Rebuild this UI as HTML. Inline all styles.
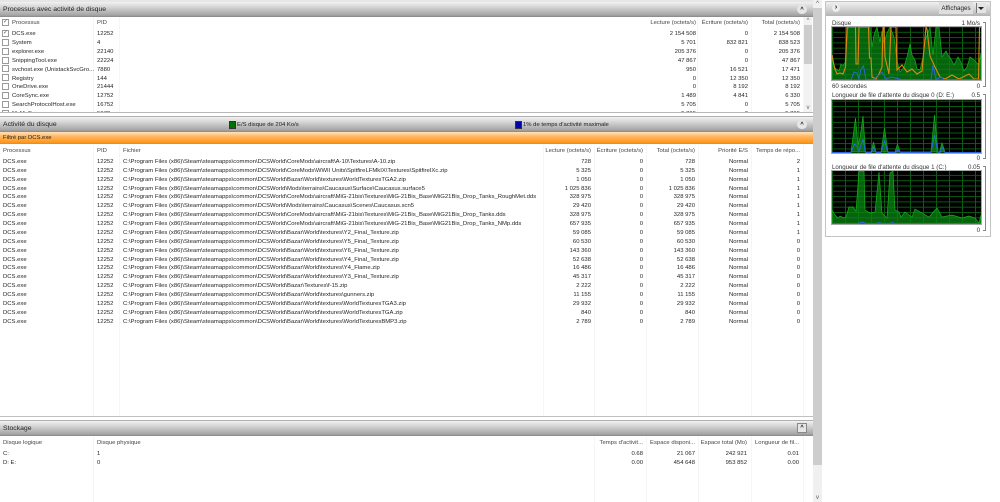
<!DOCTYPE html>
<html lang="fr"><head><meta charset="utf-8"><title>Moniteur de ressources</title>
<style>
html,body{margin:0;padding:0;background:#fff;width:1000px;height:502px;overflow:hidden}
#w{position:absolute;left:0;top:0;width:1000px;height:502px;overflow:hidden;font:5.92px/9px "Liberation Sans",sans-serif;color:#262626;filter:blur(.38px)}
#w div{position:absolute}
.bar{left:0;width:813px;height:15px;background:linear-gradient(#f2f2f2,#dcdcdc 25%,#a4a4a4 88%,#868686);font-size:6.85px;line-height:16px;color:#222;text-indent:3px}
.btn{left:797px;width:10px;height:9px;border-radius:5px;background:#e6e6e6;text-align:center;font-size:6px;line-height:10px;text-indent:0;color:#111;font-weight:bold}
.v{width:1px;background:#f6f6fa}
.h{height:9px;left:0;width:804px;white-space:nowrap;color:#444}
.t{height:9px;left:0;width:804px;white-space:nowrap}
.h span,.t span{position:absolute;top:1px}
.a{left:3px}.k{left:12px}.p{left:97px}.f{left:123px}
.c1,.c2,.c3,.c4,.c5,.c6,.c7,.c8,.c9,.c10,.c11,.c12{text-align:right;width:70px}
.c1{left:626px}.c2{left:678px}.c3{left:730px}
.c4{left:521px}.c5{left:573px}.c6{left:625px}.c7{left:678px}.c8{left:730px}
.c9{left:573px}.c10{left:625px}.c11{left:677px}.c12{left:729px}
.cb{left:2px;width:5px;height:5px;border:1px solid #9a9a9a;background:#fff;font-size:6px;line-height:5px;text-align:center;color:#666}
.lb{white-space:nowrap;color:#333;font-size:6.15px;line-height:9px}
.rb{right:20px;text-align:right;color:#333;font-size:6.15px;line-height:9px}
.br{left:983px;width:2px;border:solid #888;border-width:1px 1px 1px 0}
</style></head><body><div id="w">

<!-- section 1 -->
<div style="left:0;top:0;width:813px;height:2px;background:#e6e6e6"></div>
<div class="bar" style="top:2px">Processus avec activité de disque<div class="btn" style="top:3px">^</div></div>
<div style="left:0;top:17px;width:813px;height:95px;overflow:hidden">
<div class="v" style="left:93px;top:0;height:95px"></div><div class="v" style="left:119px;top:0;height:95px"></div>
<div class="v" style="left:697px;top:0;height:95px"></div><div class="v" style="left:751px;top:0;height:95px"></div><div class="v" style="left:803px;top:0;height:95px"></div>
<div class="h" style="top:1px"><span class="k">Processus</span><span class="p">PID</span><span class="c1">Lecture (octets/s)</span><span class="c2">Écriture (octets/s)</span><span class="c3">Total (octets/s)</span></div>
<div class="cb" style="top:2px">✓</div>
<div class="cb" style="top:13px">✓</div><div class="t" style="top:12px"><span class="k">DCS.exe</span><span class="p">12252</span><span class="c1">2 154 508</span><span class="c2">0</span><span class="c3">2 154 508</span></div>
<div class="cb" style="top:22px"></div><div class="t" style="top:21px"><span class="k">System</span><span class="p">4</span><span class="c1">5 701</span><span class="c2">832 821</span><span class="c3">838 523</span></div>
<div class="cb" style="top:31px"></div><div class="t" style="top:30px"><span class="k">explorer.exe</span><span class="p">22140</span><span class="c1">205 376</span><span class="c2">0</span><span class="c3">205 376</span></div>
<div class="cb" style="top:40px"></div><div class="t" style="top:39px"><span class="k">SnippingTool.exe</span><span class="p">22224</span><span class="c1">47 867</span><span class="c2">0</span><span class="c3">47 867</span></div>
<div class="cb" style="top:48px"></div><div class="t" style="top:47.5px"><span class="k">svchost.exe (UnistackSvcGro...</span><span class="p">7880</span><span class="c1">950</span><span class="c2">16 521</span><span class="c3">17 471</span></div>
<div class="cb" style="top:57px"></div><div class="t" style="top:56.5px"><span class="k">Registry</span><span class="p">144</span><span class="c1">0</span><span class="c2">12 350</span><span class="c3">12 350</span></div>
<div class="cb" style="top:66px"></div><div class="t" style="top:65px"><span class="k">OneDrive.exe</span><span class="p">21444</span><span class="c1">0</span><span class="c2">8 192</span><span class="c3">8 192</span></div>
<div class="cb" style="top:75px"></div><div class="t" style="top:74px"><span class="k">CoreSync.exe</span><span class="p">12752</span><span class="c1">1 489</span><span class="c2">4 841</span><span class="c3">6 330</span></div>
<div class="cb" style="top:84px"></div><div class="t" style="top:83px"><span class="k">SearchProtocolHost.exe</span><span class="p">16752</span><span class="c1">5 705</span><span class="c2">0</span><span class="c3">5 705</span></div>
<div class="cb" style="top:93px"></div><div class="t" style="top:92px"><span class="k">MsMpEng.exe</span><span class="p">5672</span><span class="c1">5 395</span><span class="c2">0</span><span class="c3">5 395</span></div>
<div style="left:804px;top:0;width:8px;height:95px;background:#f2f2f2"></div>
<div style="left:804px;top:8px;width:8px;height:39px;background:#cdcdcd"></div>
<div style="left:804px;top:0;width:8px;text-align:center;color:#666;font-size:6px;line-height:8px">^</div>
<div style="left:804px;top:88px;width:8px;text-align:center;color:#666;font-size:6px;line-height:7px">v</div>
</div>
<div style="left:0;top:112px;width:813px;height:1px;background:#b8b8b8"></div>

<!-- section 2 -->
<div style="left:0;top:116px;width:813px;height:1px;background:#b0b0b0"></div>
<div class="bar" style="top:117px">Activité du disque<div class="btn" style="top:3px">^</div></div>
<div style="left:229px;top:121px;width:5px;height:6px;background:#007000;border:1px solid #333"></div>
<div style="left:237px;top:120px;white-space:nowrap;color:#222;line-height:10px">E/S disque de 204 Ko/s</div>
<div style="left:515px;top:121px;width:5px;height:6px;background:#0000b0;border:1px solid #333"></div>
<div style="left:523px;top:120px;white-space:nowrap;color:#222;line-height:10px">1% de temps d'activité maximale</div>
<div style="left:0;top:132px;width:813px;height:12px;background:linear-gradient(#ffe2bb,#ffb45c 40%,#ff9a1f 85%,#e88a18);line-height:13px;text-indent:3px;color:#222">Filtré par DCS.exe</div>
<div style="left:0;top:145px;width:804px;height:271px">
<div class="v" style="left:93px;top:0;height:271px"></div><div class="v" style="left:119px;top:0;height:271px"></div><div class="v" style="left:543px;top:0;height:271px"></div><div class="v" style="left:594px;top:0;height:271px"></div><div class="v" style="left:646px;top:0;height:271px"></div><div class="v" style="left:698px;top:0;height:271px"></div><div class="v" style="left:751px;top:0;height:271px"></div><div class="v" style="left:803px;top:0;height:271px"></div>
<div class="h" style="top:1px"><span class="a">Processus</span><span class="p">PID</span><span class="f">Fichier</span><span class="c4">Lecture (octets/s)</span><span class="c5">Écriture (octets/s)</span><span class="c6">Total (octets/s)</span><span class="c7">Priorité E/S</span><span class="c8">Temps de répo...</span></div>
<div class="t" style="top:12px"><span class="a">DCS.exe</span><span class="p">12252</span><span class="f">C:\Program Files (x86)\Steam\steamapps\common\DCSWorld\CoreMods\aircraft\A-10\Textures\A-10.zip</span><span class="c4">728</span><span class="c5">0</span><span class="c6">728</span><span class="c7">Normal</span><span class="c8">2</span></div>
<div class="t" style="top:20.9px"><span class="a">DCS.exe</span><span class="p">12252</span><span class="f">C:\Program Files (x86)\Steam\steamapps\common\DCSWorld\CoreMods\WWII Units\SpitfireLFMkIX\Textures\SpitfireIXc.zip</span><span class="c4">5 325</span><span class="c5">0</span><span class="c6">5 325</span><span class="c7">Normal</span><span class="c8">1</span></div>
<div class="t" style="top:29.7px"><span class="a">DCS.exe</span><span class="p">12252</span><span class="f">C:\Program Files (x86)\Steam\steamapps\common\DCSWorld\Bazar\World\textures\WorldTexturesTGA2.zip</span><span class="c4">1 050</span><span class="c5">0</span><span class="c6">1 050</span><span class="c7">Normal</span><span class="c8">1</span></div>
<div class="t" style="top:38.6px"><span class="a">DCS.exe</span><span class="p">12252</span><span class="f">C:\Program Files (x86)\Steam\steamapps\common\DCSWorld\Mods\terrains\Caucasus\Surface\Caucasus.surface5</span><span class="c4">1 025 836</span><span class="c5">0</span><span class="c6">1 025 836</span><span class="c7">Normal</span><span class="c8">1</span></div>
<div class="t" style="top:47.4px"><span class="a">DCS.exe</span><span class="p">12252</span><span class="f">C:\Program Files (x86)\Steam\steamapps\common\DCSWorld\CoreMods\aircraft\MiG-21bis\Textures\MiG-21Bis_Base\MiG21Bis_Drop_Tanks_RoughMet.dds</span><span class="c4">328 975</span><span class="c5">0</span><span class="c6">328 975</span><span class="c7">Normal</span><span class="c8">1</span></div>
<div class="t" style="top:56.3px"><span class="a">DCS.exe</span><span class="p">12252</span><span class="f">C:\Program Files (x86)\Steam\steamapps\common\DCSWorld\Mods\terrains\Caucasus\Scenes\Caucasus.scn5</span><span class="c4">29 420</span><span class="c5">0</span><span class="c6">29 420</span><span class="c7">Normal</span><span class="c8">1</span></div>
<div class="t" style="top:65.2px"><span class="a">DCS.exe</span><span class="p">12252</span><span class="f">C:\Program Files (x86)\Steam\steamapps\common\DCSWorld\CoreMods\aircraft\MiG-21bis\Textures\MiG-21Bis_Base\MiG21Bis_Drop_Tanks.dds</span><span class="c4">328 975</span><span class="c5">0</span><span class="c6">328 975</span><span class="c7">Normal</span><span class="c8">1</span></div>
<div class="t" style="top:74px"><span class="a">DCS.exe</span><span class="p">12252</span><span class="f">C:\Program Files (x86)\Steam\steamapps\common\DCSWorld\CoreMods\aircraft\MiG-21bis\Textures\MiG-21Bis_Base\MiG21Bis_Drop_Tanks_NMp.dds</span><span class="c4">657 935</span><span class="c5">0</span><span class="c6">657 935</span><span class="c7">Normal</span><span class="c8">1</span></div>
<div class="t" style="top:82.9px"><span class="a">DCS.exe</span><span class="p">12252</span><span class="f">C:\Program Files (x86)\Steam\steamapps\common\DCSWorld\Bazar\World\textures\Y2_Final_Texture.zip</span><span class="c4">59 085</span><span class="c5">0</span><span class="c6">59 085</span><span class="c7">Normal</span><span class="c8">1</span></div>
<div class="t" style="top:91.7px"><span class="a">DCS.exe</span><span class="p">12252</span><span class="f">C:\Program Files (x86)\Steam\steamapps\common\DCSWorld\Bazar\World\textures\Y5_Final_Texture.zip</span><span class="c4">60 530</span><span class="c5">0</span><span class="c6">60 530</span><span class="c7">Normal</span><span class="c8">0</span></div>
<div class="t" style="top:100.6px"><span class="a">DCS.exe</span><span class="p">12252</span><span class="f">C:\Program Files (x86)\Steam\steamapps\common\DCSWorld\Bazar\World\textures\Y6_Final_Texture.zip</span><span class="c4">143 360</span><span class="c5">0</span><span class="c6">143 360</span><span class="c7">Normal</span><span class="c8">0</span></div>
<div class="t" style="top:109.5px"><span class="a">DCS.exe</span><span class="p">12252</span><span class="f">C:\Program Files (x86)\Steam\steamapps\common\DCSWorld\Bazar\World\textures\Y4_Final_Texture.zip</span><span class="c4">52 638</span><span class="c5">0</span><span class="c6">52 638</span><span class="c7">Normal</span><span class="c8">0</span></div>
<div class="t" style="top:118.3px"><span class="a">DCS.exe</span><span class="p">12252</span><span class="f">C:\Program Files (x86)\Steam\steamapps\common\DCSWorld\Bazar\World\textures\Y4_Flame.zip</span><span class="c4">16 486</span><span class="c5">0</span><span class="c6">16 486</span><span class="c7">Normal</span><span class="c8">0</span></div>
<div class="t" style="top:127.2px"><span class="a">DCS.exe</span><span class="p">12252</span><span class="f">C:\Program Files (x86)\Steam\steamapps\common\DCSWorld\Bazar\World\textures\Y3_Final_Texture.zip</span><span class="c4">45 317</span><span class="c5">0</span><span class="c6">45 317</span><span class="c7">Normal</span><span class="c8">0</span></div>
<div class="t" style="top:136px"><span class="a">DCS.exe</span><span class="p">12252</span><span class="f">C:\Program Files (x86)\Steam\steamapps\common\DCSWorld\Bazar\Textures\f-15.zip</span><span class="c4">2 222</span><span class="c5">0</span><span class="c6">2 222</span><span class="c7">Normal</span><span class="c8">0</span></div>
<div class="t" style="top:144.9px"><span class="a">DCS.exe</span><span class="p">12252</span><span class="f">C:\Program Files (x86)\Steam\steamapps\common\DCSWorld\Bazar\World\textures\gunners.zip</span><span class="c4">11 155</span><span class="c5">0</span><span class="c6">11 155</span><span class="c7">Normal</span><span class="c8">0</span></div>
<div class="t" style="top:153.8px"><span class="a">DCS.exe</span><span class="p">12252</span><span class="f">C:\Program Files (x86)\Steam\steamapps\common\DCSWorld\Bazar\World\textures\WorldTexturesTGA3.zip</span><span class="c4">29 932</span><span class="c5">0</span><span class="c6">29 932</span><span class="c7">Normal</span><span class="c8">0</span></div>
<div class="t" style="top:162.6px"><span class="a">DCS.exe</span><span class="p">12252</span><span class="f">C:\Program Files (x86)\Steam\steamapps\common\DCSWorld\Bazar\World\textures\WorldTexturesTGA.zip</span><span class="c4">840</span><span class="c5">0</span><span class="c6">840</span><span class="c7">Normal</span><span class="c8">0</span></div>
<div class="t" style="top:171.5px"><span class="a">DCS.exe</span><span class="p">12252</span><span class="f">C:\Program Files (x86)\Steam\steamapps\common\DCSWorld\Bazar\World\textures\WorldTexturesBMP3.zip</span><span class="c4">2 789</span><span class="c5">0</span><span class="c6">2 789</span><span class="c7">Normal</span><span class="c8">0</span></div>
</div>
<div style="left:0;top:416px;width:813px;height:1px;background:#c0c0c0"></div>

<!-- section 3 -->
<div style="left:0;top:420px;width:813px;height:1px;background:#b0b0b0"></div>
<div class="bar" style="top:421px">Stockage<div style="left:797px;top:2px;width:10px;height:10px;background:#e6e6e6;border:1px solid #888;box-sizing:border-box;text-align:center;text-indent:0;font-size:6px;line-height:9px;font-weight:bold;color:#111">^</div></div>
<div style="left:0;top:436px;width:804px;height:66px">
<div class="v" style="left:93px;top:0;height:66px"></div><div class="v" style="left:594px;top:0;height:66px"></div><div class="v" style="left:646px;top:0;height:66px"></div><div class="v" style="left:698px;top:0;height:66px"></div><div class="v" style="left:751px;top:0;height:66px"></div><div class="v" style="left:803px;top:0;height:66px"></div>
<div class="h" style="top:1.5px"><span class="a">Disque logique</span><span class="p">Disque physique</span><span class="c9">Temps d'activit...</span><span class="c10">Espace disponi...</span><span class="c11">Espace total (Mo)</span><span class="c12">Longueur de fil...</span></div>
<div class="t" style="top:12.5px"><span class="a">C:</span><span class="p">1</span><span class="c9">0.68</span><span class="c10">21 067</span><span class="c11">242 921</span><span class="c12">0.01</span></div>
<div class="t" style="top:21.5px"><span class="a">D: E:</span><span class="p">0</span><span class="c9">0.00</span><span class="c10">454 648</span><span class="c11">953 852</span><span class="c12">0.00</span></div>
</div>

<!-- main scrollbar -->
<div style="left:813px;top:0;width:9px;height:502px;background:#f0f0f0"></div>
<div style="left:813px;top:8px;width:9px;height:457px;background:#cdcdcd"></div>
<div style="left:813px;top:0;width:9px;text-align:center;font-size:6px;line-height:8px;color:#555">^</div>
<div style="left:813px;top:494px;width:9px;text-align:center;font-size:6px;line-height:8px;color:#555">v</div>

<!-- right panel -->
<div style="left:825px;top:1px;width:164px;height:234px;border:1px solid #c4c4c4;background:#fff"></div>
<div style="left:826px;top:2px;width:164px;height:14px;background:linear-gradient(#f0f0f0,#dadada 40%,#b4b4b4)"></div>
<div style="left:832px;top:4px;width:8px;height:8px;border-radius:4px;background:#ececec;text-align:center;font-size:7px;line-height:7px;font-weight:bold;color:#111">›</div>
<div style="left:939px;top:2px;width:34px;height:12px;background:#dedede;text-align:center;line-height:13px;font-size:6.3px;color:#222">Affichages</div>
<div style="left:976px;top:3px;width:9px;height:10px;background:#e4e4e4;border-left:1px solid #777"></div>
<div style="left:978px;top:7px;width:0;height:0;border:3px solid transparent;border-top:3px solid #222"></div>

<div class="lb" style="left:832px;top:18.500px">Disque</div><div class="rb" style="top:18.500px">1 Mo/s</div>
<div class="br" style="top:22px;height:63px"></div>
<div class="lb" style="left:832px;top:81.500px">60 secondes</div><div class="rb" style="top:81.500px">0</div>
<div class="lb" style="left:832px;top:90.500px">Longueur de file d'attente du disque 0 (D: E:)</div><div class="rb" style="top:90.500px">0.5</div>
<div class="br" style="top:94px;height:63px"></div>
<div class="rb" style="top:153.500px">0</div>
<div class="lb" style="left:832px;top:162.500px">Longueur de file d'attente du disque 1 (C:)</div><div class="rb" style="top:162.500px">0.05</div>
<div class="br" style="top:166px;height:63px"></div>
<div class="rb" style="top:225.500px">0</div>

<svg style="position:absolute;left:0;top:0;width:1000px;height:502px" viewBox="0 0 1000 502">
<defs>
<pattern id="g" width="13" height="5.3" patternUnits="userSpaceOnUse"><path d="M.5 0V5.3M0 .5H13" stroke="#0a5c10" stroke-width="1" fill="none"/></pattern>
</defs>
<rect x="832" y="27" width="149" height="53" fill="#000"/><rect x="832" y="27" width="149" height="53" fill="url(#g)"/>
<rect x="832" y="100" width="149" height="53" fill="#000"/><rect x="832" y="100" width="149" height="53" fill="url(#g)"/>
<rect x="832" y="171" width="149" height="53" fill="#000"/><rect x="832" y="171" width="149" height="53" fill="url(#g)"/>

<g transform="translate(832,27)">
<path d="M0 30L3 41L7 44L9 37L11 39L13 36L16 0L38 0L40 20L42 8L45 0L48 15L50 4L52 16L55 6L58 0L62 10L65 34L68 45L72 40L75 30L78 17L80 28L83 33L85 42L88 43L91 30L93 14L95 8L98 0L101 28L104 0L107 0L110 30L114 24L116 28L119 32L122 38L126 30L129 35L132 44L135 40L138 30L142 33L147 38L149 26L149 53L0 53Z" fill="#0a8412" fill-opacity=".75" stroke="#14b01c" stroke-width=".7"/>
<path d="M0 28L2.5 41L5 47L8 46L11 47L13.5 40L15 0L23.500 0L24 37L26 37L27 0L36.500 0L37.500 31L39 31L40 50L44 52L47 47L50 40L51 0L52 0L53 30L57 47L59 0L64 0L65 43L70 38L75 45L80 42L85 47L90 44L94 0L95 2L98 29L103 40L108 50L113 52L120 48L127 52L137 47L142 52L146.500 52L147.500 0L149 0" fill="none" stroke="#e08a10" stroke-width="1.100"/>
<path d="M0 52.500L19 52.500L22 45L25 46L27 52L29 42L31.500 39L34 52.500L42 52.500L50 45L54 52L59 50L64 51L69 52.500L99 52.500L101 38L104 52.500L109 50L112 52.500L149 52.500" fill="none" stroke="#2a66e0" stroke-width="1"/>
</g>

<g transform="translate(832,100)">
<path d="M19 52L23.500 18L26 45L28 38L31 16L33.500 52L39 52L41.500 42L44 52L49 52L52.500 28L56 52L63 52L65.500 44L68 52L99 52L102.500 15L106 52L107.500 52L110 43L113 52Z" fill="#0a8412" fill-opacity=".8" stroke="#14b01c" stroke-width=".7"/>
<path d="M0 52.500L19 52.500L22.500 44L25 46L27 51L31 39L33.500 52.500L39.500 52.500L41.500 47L44 52.500L49 52.500L52.500 41L56 52.500L64 52.500L65.500 49L68 52.500L99 52.500L102.500 35L106 52.500L108 52.500L110 47L113 52.500L149 52.500" fill="none" stroke="#2a66e0" stroke-width="1"/>
</g>

<g transform="translate(832,171)">
<path d="M0 39L3 44L6 47L8 45L12 47L14 46L17 36L21 36L24 40L27 0L32 0L33 39L38 42L43 41L47 1L50 42L55 47L58 2L61 0L63 39L67 41L69 46L73 41L77 44L80 46L83 38L90 42L97 46L105 37L110 46L120 44L130 47L137 45L143 47L147 52L149 44L149 53L0 53Z" fill="#0a8412" fill-opacity=".75" stroke="#14b01c" stroke-width=".7"/>
<path d="M0 52.500L26 52.500L30 51L34 52.500L45 52.500L47 51.500L50 52.500L58 52.500L60 51.500L63 52.500L149 52.500" fill="none" stroke="#2a66e0" stroke-width="1"/>
</g>
<g fill="none" stroke="#a8a8a8" stroke-width="1">
<rect x="831.500" y="26.500" width="150" height="54"/><rect x="831.500" y="99.500" width="150" height="54"/><rect x="831.500" y="170.500" width="150" height="54"/>
</g>
</svg>
</div></body></html>
